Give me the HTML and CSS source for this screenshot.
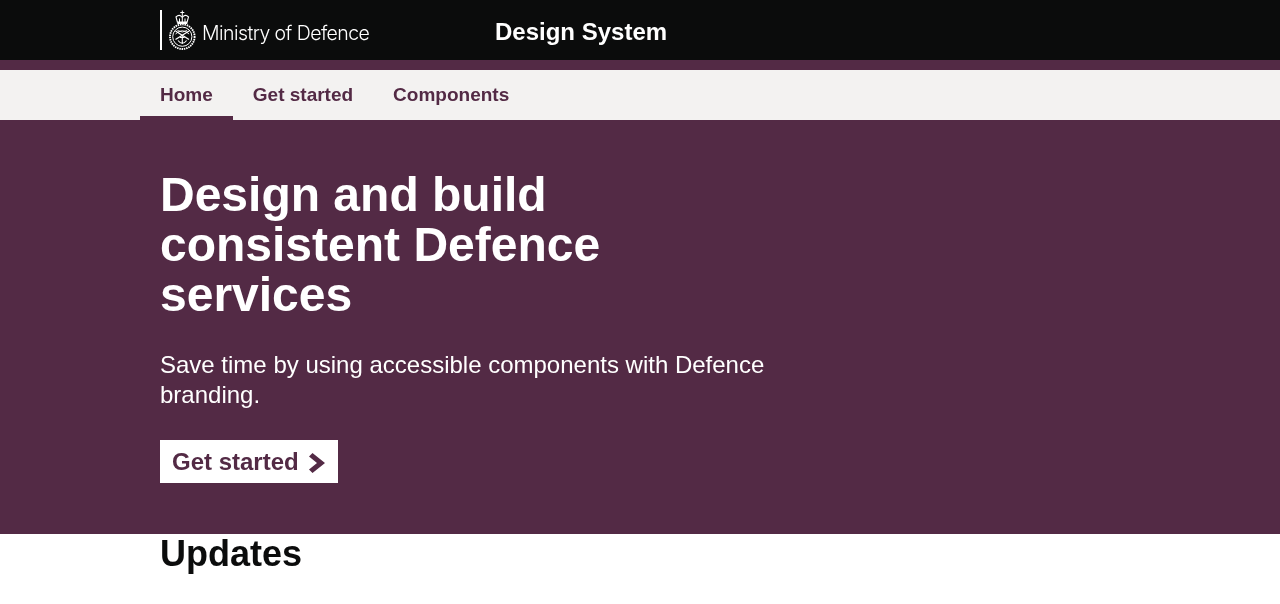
FILE: index.html
```html
<!DOCTYPE html>
<html lang="en">
<head>
<meta charset="utf-8">
<title>Design System</title>
<link rel="stylesheet" href="styles.css">
</head>
<body>
<header class="masthead">
  <div class="container masthead-inner">
    <a class="logo" href="#">
      <svg class="crest" width="29" height="40" viewBox="0 0 29 40" aria-hidden="true">
        <g fill="none" stroke="#fff">
          <path d="M8.500 12.500 L7 7 Q10.500 3.500 13.300 7.500 Q16 3.500 19.500 7 L18 12.500" stroke-width="1.100"/>
          <path d="M13.300 0.500v7M11.300 2.500h4M13.300 8v4M10.500 8.500v4M16 8.500v4" stroke-width="1"/>
          <circle cx="13.300" cy="26.700" r="12.300" stroke-width="1.900" stroke-dasharray="1.500 0.800"/>
          <circle cx="13.300" cy="26.700" r="9.600" stroke-width="1"/>
          <path d="M6.500 21 L20 29.500M20 21 L6.500 29.500" stroke-width="1.300"/>
          <path d="M13.300 25v9M11 27.500h4.600M9 30.500q4.300 5.500 8.600 0" stroke-width="1.100"/>
          <path d="M6.500 24q6.800-6.500 13.600 0M8.500 20.500q4.800 3 9.600 0" stroke-width="0.900"/>
        </g>
        <path d="M8.300 11.500h10v2.500h-10z" fill="#fff"/>
        <circle cx="13.300" cy="39.500" r="0.500" fill="#fff"/>
      </svg>
      <span class="logo-text">Ministry of Defence</span>
    </a>
    <a class="service-name" href="#">Design System</a>
  </div>
</header>
<div class="band"></div>
<nav class="nav">
  <ul class="container nav-list">
    <li><a class="nav-link nav-link-active" href="#">Home</a></li>
    <li><a class="nav-link" href="#">Get started</a></li>
    <li><a class="nav-link" href="#">Components</a></li>
  </ul>
</nav>
<section class="hero">
  <div class="container">
    <h1 class="hero-title">Design and build consistent Defence services</h1>
    <p class="hero-lead">Save time by using accessible components with Defence branding.</p>
    <a class="button" href="#">Get started
      <svg class="button-icon" width="17" height="20" viewBox="0 0 17 20" aria-hidden="true"><path d="M0 3.500 3.500 0 16 10 3.500 20 0 16.500 8 10z" fill="#532a45"/></svg>
    </a>
  </div>
</section>
<main class="container">
  <h2 class="updates-title">Updates</h2>
</main>
</body>
</html>
```

FILE: styles.css
```css
* { box-sizing: border-box; }

html, body { margin: 0; padding: 0; }

body {
  font-family: "Liberation Sans", Arial, sans-serif;
  color: #0b0c0c;
  background: #fff;
  will-change: transform;
}

a { text-decoration: none; color: inherit; }

.container {
  width: 1000px;
  margin: 0 auto;
  padding: 0 20px;
}

.masthead {
  height: 60px;
  background: #0b0c0c;
  color: #fff;
}

.masthead-inner {
  display: flex;
  align-items: center;
  height: 60px;
}

.logo {
  display: flex;
  align-items: center;
  width: 335px;
  height: 40px;
  border-left: 2px solid #fff;
  padding-left: 7px;
}

.crest { flex: none; }

.logo-text {
  margin-left: 4px;
  margin-top: 6px;
  font-family: Inter, "Liberation Sans", sans-serif;
  font-weight: 300;
  font-size: 19.500px;
  line-height: 40px;
  letter-spacing: -0.560px;
}

.service-name {
  margin-top: 4px;
  font-size: 24px;
  font-weight: 700;
  line-height: 30px;
}

.band {
  height: 10px;
  background: #532a45;
}

.nav {
  height: 50px;
  background: #f3f2f1;
}

.nav-list {
  display: flex;
  list-style: none;
  padding: 0;
}

.nav-link {
  display: block;
  height: 50px;
  padding: 0 20px;
  font-size: 19px;
  font-weight: 700;
  line-height: 50px;
  color: #532a45;
}

.nav-link-active { border-bottom: 4px solid #532a45; }

.hero {
  height: 414px;
  padding-top: 50px;
  background: #532a45;
  color: #fff;
}

.hero-title {
  width: 560px;
  margin: 0 0 30px;
  font-size: 48px;
  font-weight: 700;
  line-height: 50px;
}

.hero-lead {
  width: 640px;
  margin: 0 0 30px;
  font-size: 24px;
  line-height: 30px;
}

.button {
  display: inline-flex;
  align-items: center;
  height: 43px;
  padding: 0 12px;
  background: #fff;
  color: #532a45;
  font-size: 24px;
  font-weight: 700;
  line-height: 43px;
}

.button-icon { margin-left: 10px; margin-top: 2px; }

.updates-title {
  margin: 0;
  font-size: 36px;
  font-weight: 700;
  line-height: 40px;
}
```
